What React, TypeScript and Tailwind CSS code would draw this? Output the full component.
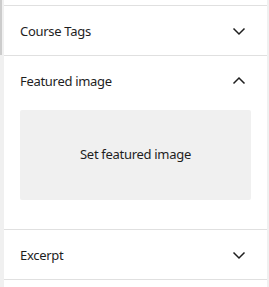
import React from "react";

const Chevron = ({ up = false }: { up?: boolean }) => (
  <svg width="24" height="24" viewBox="0 0 24 24" className="shrink-0" fill="none">
    {up ? (
      <path d="M6.5 14.5 12 9l5.5 5.5" stroke="#1e1e1e" strokeWidth="1.5" />
    ) : (
      <path d="M17.5 9.5 12 15 6.5 9.5" stroke="#1e1e1e" strokeWidth="1.5" />
    )}
  </svg>
);

const PanelHeader = ({ title, open = false }: { title: string; open?: boolean }) => (
  <button className="flex h-[49px] w-full items-center justify-between pl-4 pr-4 text-left text-[13px] tracking-[-0.3px] text-[#1e1e1e]">
    <span className="pt-[2px]">{title}</span>
    <Chevron up={open} />
  </button>
);

export default function App() {
  return (
    <div
      className="flex h-[287px] w-[269px] bg-[#f0f0f0]"
      style={{ fontFamily: '"Noto Sans", "Open Sans", sans-serif' }}
    >
      {/* left edge: resize grip on top part */}
      <div className="flex w-1 flex-col">
        <div className="h-[55px] w-[2px] bg-[#cccccc]" />
      </div>

      <div className="flex w-[263px] flex-col bg-white">
        <div className="h-[5px]" />

        <div className="border-t border-[#e0e0e0]">
          <PanelHeader title="Course Tags" />
        </div>

        <div className="border-t border-[#e0e0e0]">
          <PanelHeader title="Featured image" open />
          <div className="px-4 pt-[5px] pb-[29px]">
            <div className="flex h-[90px] items-center justify-center rounded-[2px] bg-[#f0f0f0] text-[13px] tracking-[-0.3px] text-[#1e1e1e]">
              Set featured image
            </div>
          </div>
        </div>

        <div className="border-t border-[#e0e0e0]">
          <PanelHeader title="Excerpt" />
        </div>

        <div className="flex-1 border-t border-[#e0e0e0]" />
      </div>
    </div>
  );
}
